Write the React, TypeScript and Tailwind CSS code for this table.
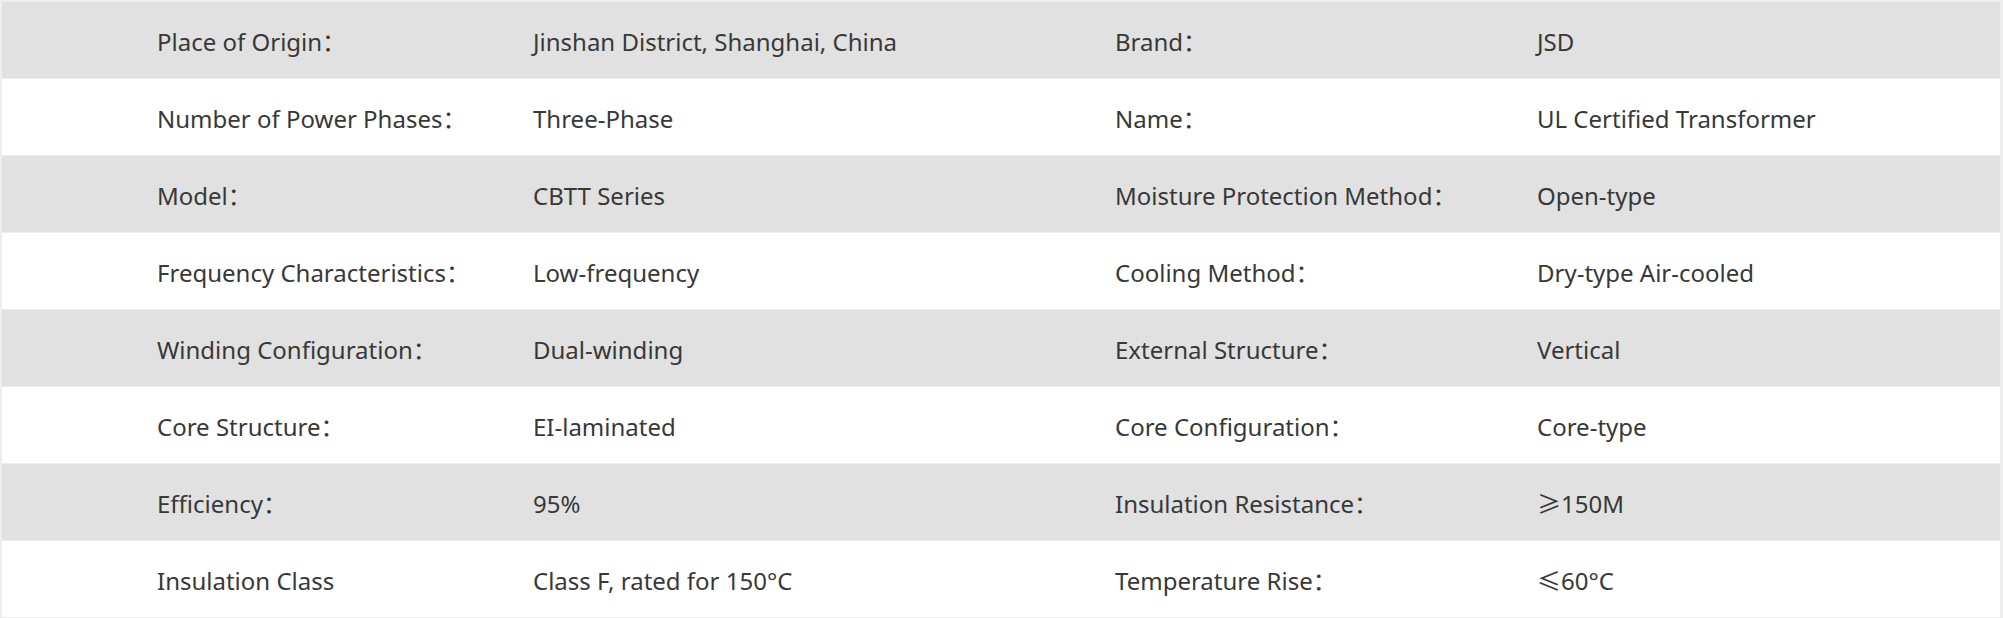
const rows = [
  ["Place of Origin：", "Jinshan District, Shanghai, China", "Brand：", "JSD"],
  ["Number of Power Phases：", "Three-Phase", "Name：", "UL Certified Transformer"],
  ["Model：", "CBTT Series", "Moisture Protection Method：", "Open-type"],
  ["Frequency Characteristics：", "Low-frequency", "Cooling Method：", "Dry-type Air-cooled"],
  ["Winding Configuration：", "Dual-winding", "External Structure：", "Vertical"],
  ["Core Structure：", "EI-laminated", "Core Configuration：", "Core-type"],
  ["Efficiency：", "95%", "Insulation Resistance：", "≥150M"],
  ["Insulation Class", "Class F, rated for 150°C", "Temperature Rise：", "≤60°C"],
];

export default function App() {
  return (
    <div className="w-[2003px] h-[618px] bg-white">
      <div
        className="border-2 border-r-[3px] border-[#eeeeee] text-[24px] text-[#383838]"
        style={{ fontFamily: '"Noto Sans", "Noto Sans CJK SC", sans-serif' }}
      >
        {rows.map((r, i) => (
          <div
            key={i}
            className={
              "grid grid-cols-[531px_582px_422px_1fr] h-[77px] pt-[3px] items-center border-b border-[#eeeeee] last:border-b-0 last:h-[76px] " +
              (i % 2 === 0 ? "bg-[#e1e1e1]" : "bg-white")
            }
          >
            <div className="pl-[155px] whitespace-nowrap">{r[0]}</div>
            <div className="whitespace-nowrap">{r[1]}</div>
            <div className="whitespace-nowrap">{r[2]}</div>
            <div className="whitespace-nowrap">{r[3]}</div>
          </div>
        ))}
      </div>
    </div>
  );
}
